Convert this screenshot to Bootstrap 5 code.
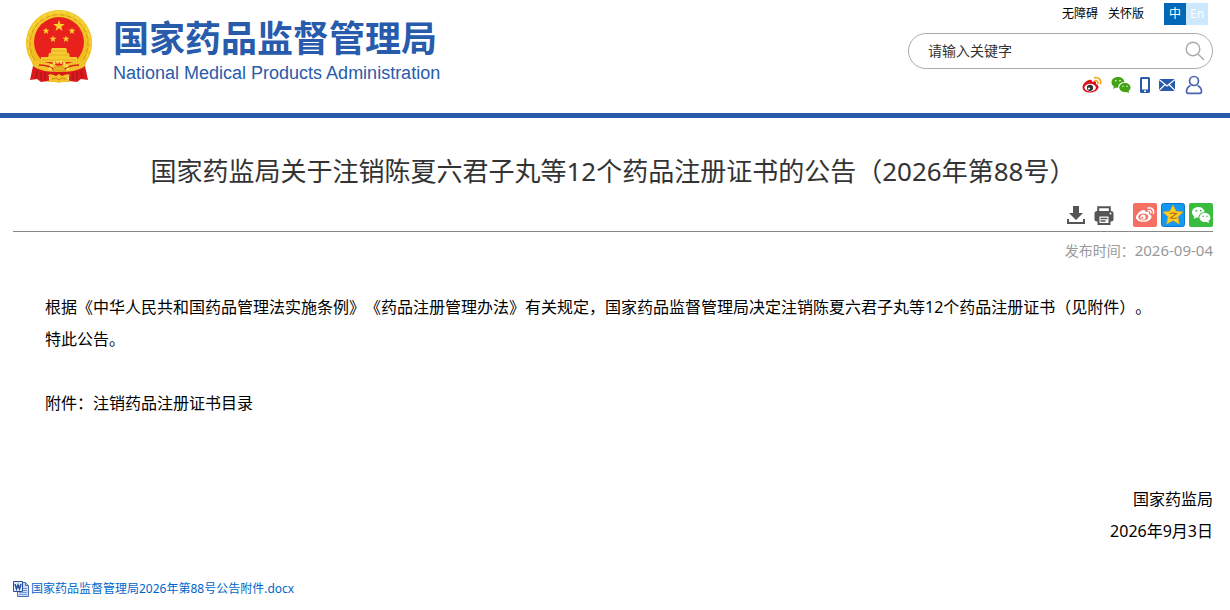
<!DOCTYPE html>
<html lang="zh-CN">
<head>
    <meta charset="UTF-8">
    <meta name="viewport" content="width=device-width, initial-scale=1.0">
    <title>国家药监局公告</title>
    <!-- Bootstrap CSS -->
    <link href="https://cdn.jsdelivr.net/npm/bootstrap@5.3.0/dist/css/bootstrap.min.css" rel="stylesheet">
    <!-- Custom CSS -->
    <style>
        body {
            font-family: "Noto Sans", "Noto Sans CJK SC", sans-serif;
            font-size: 16px;
            line-height: 32px;
            color: #000;
            text-spacing-trim: space-all;
        }
        a {
            color: inherit;
            text-decoration: none;
        }
        svg {
            display: block;
        }
        .page-inner {
            padding: 0 17px 0 13px;
        }
        .site-header {
            height: 118px;
            border-bottom: 5px solid #285bac;
        }
        .brand {
            gap: 20px;
            padding: 9px 0 0 12px;
            color: #285bac;
        }
        .brand-text {
            padding-top: 8px;
        }
        .brand-cn {
            font-size: 36px;
            font-weight: 700;
            line-height: 44px;
        }
        .brand-en {
            font-family: "Liberation Sans", sans-serif;
            font-size: 18px;
            line-height: 24px;
        }
        .tools {
            width: 305px;
            padding-top: 3px;
        }
        .top-links {
            gap: 10px;
            padding-right: 5px;
            font-size: 12px;
            line-height: 22px;
        }
        .lang-switch {
            margin-left: 10px;
        }
        .lang-switch a {
            width: 22px;
            text-align: center;
            color: #fff;
            background: #cce8ff;
        }
        .lang-switch .current {
            background: #0068b7;
        }
        .search-box {
            height: 36px;
            margin-top: 8px;
            padding: 0 7px 0 19px;
            border: 1px solid #aaa;
            border-radius: 18px;
        }
        .search-box input {
            min-width: 0;
            padding: 0;
            border: 0;
            outline: 0;
            font-size: 14px;
            line-height: 20px;
        }
        .search-box input::placeholder {
            color: #333;
            opacity: 1;
        }
        .search-box button {
            padding: 0;
            border: 0;
            background: none;
        }
        .social {
            gap: 9px;
            padding: 6px 10px 0 0;
        }
        .article-title {
            margin: 0;
            padding-top: 33px;
            font-size: 26px;
            line-height: 40px;
            color: #333;
        }
        .share-bar {
            gap: 4px;
            padding: 12px 0 4px;
            border-bottom: 1px solid #888;
        }
        .share-bar button {
            padding: 0;
            border: 0;
            background: none;
        }
        .share-bar .print-btn {
            margin-right: 13px;
        }
        .publish-date {
            padding-top: 2px;
            font-size: 14px;
            color: #999;
        }
        .publish-date time {
            font-size: 15px;
        }
        .article-body {
            padding-top: 24px;
        }
        .article-body p {
            min-height: 32px;
            margin: 0;
        }
        .indented {
            text-indent: 32px;
        }
        .attachment {
            gap: 2px;
            padding-top: 26px;
            font-size: 12px;
            color: #0066cc;
        }
    </style>
</head>
<body>
    <header class="site-header">
        <div class="page-inner d-flex justify-content-between align-items-start">
            <a href="#" class="brand d-flex">
                <!-- National emblem -->
                <svg width="68" height="75" viewBox="0 0 68 75" aria-hidden="true">
                    <defs>
                        <path id="star" d="M0-6 1.4-1.9 5.7-1.9 2.3.7 3.5 4.9 0 2.3-3.5 4.9-2.3.7-5.7-1.9-1.4-1.9z"/>
                        <linearGradient id="gold" x2="0" y2="1">
                            <stop stop-color="#f3cd2c"/>
                            <stop offset="1" stop-color="#f0b91c"/>
                        </linearGradient>
                    </defs>
                    <!-- wheat ring -->
                    <path d="M34 1a33 33 0 0 1 27 52l-3 6H10l-3-6A33 33 0 0 1 34 1z" fill="url(#gold)"/>
                    <path d="M10 51A29 29 0 1 1 58 51" fill="none" stroke="#d99a1c" stroke-width="1" stroke-dasharray="5 2"/>
                    <path d="M8 51A31 31 0 1 1 60 51" fill="none" stroke="#fbe25a" stroke-width="1" stroke-dasharray="4 3"/>
                    <circle cx="34" cy="33" r="25" fill="#e9211d"/>
                    <g fill="#ffd42d">
                        <use href="#star" transform="translate(34 17)"/>
                        <use href="#star" transform="translate(21 22) scale(.6)"/>
                        <use href="#star" transform="translate(47 22) scale(.6)"/>
                        <use href="#star" transform="translate(28 30) scale(.6)"/>
                        <use href="#star" transform="translate(41 30) scale(.6)"/>
                    </g>
                    <!-- gate -->
                    <path d="M27 39h14l1 2H26zM26 41h16v4H26zM24 44h20l1 5H23zM16 48h36v5H16z" fill="#f6cb30"/>
                    <path d="M26 42h16M24 46h20M17 51h34" stroke="#dfa020" stroke-width=".7"/>
                    <!-- lower ears of wheat and cogwheel -->
                    <path d="M6 51c9 0 17 3 28 6 11-3 19-6 28-6l-3 9-13 7H22L9 60z" fill="#f3c228"/>
                    <path d="M14 56c7 0 13 2 16 6M54 56c-7 0-13 2-16 6" fill="none" stroke="#d81a1d" stroke-width="1.500"/>
                    <path d="M25 61a9 8 0 0 1 18 0" fill="none" stroke="#ffe45c" stroke-width="3" stroke-dasharray="2.500 1"/>
                    <path d="M28 62a6 5 0 0 1 12 0z" fill="#e9b020" stroke="#d99518"/>
                    <!-- ribbon -->
                    <path d="M8 57c6 5 17 6 26 6s20-1 26-6l3 14-7-1-4 3-8-1V67H24v5l-8 1-4-3-7 1z" fill="#d81a1d"/>
                    <path d="M12 62l-1 7M16 63v8M20 64v7M56 62l1 7M52 63v8M48 64v7" stroke="#a41118"/>
                    <path d="M23 66c3-2 6 0 8 1l3-2 3 2c2-1 5-3 8-1l-2 3 2 4h-7l-4 1-4-1h-7l2-4z" fill="#f3c228"/>
                    <path d="M27 70l4-1 3 2 3-2 4 1" fill="none" stroke="#d27c15"/>
                </svg>
                <div class="brand-text">
                    <div class="brand-cn">国家药品监督管理局</div>
                    <div class="brand-en">National Medical Products Administration</div>
                </div>
            </a>
            <div class="tools">
                <nav class="top-links d-flex justify-content-end">
                    <a href="#">无障碍</a>
                    <a href="#">关怀版</a>
                    <div class="lang-switch d-flex">
                        <a href="#" class="current">中</a>
                        <a href="#">En</a>
                    </div>
                </nav>
                <form class="search-box d-flex align-items-center">
                    <input type="text" class="flex-grow-1" placeholder="请输入关键字" aria-label="请输入关键字">
                    <button type="button" aria-label="搜索">
                        <svg width="20" height="20" viewBox="0 0 20 20" fill="none" stroke="#aaa" stroke-width="1.4">
                            <circle cx="8" cy="8" r="6.8"/>
                            <path d="m13 13 6 6"/>
                        </svg>
                    </button>
                </form>
                <div class="social d-flex justify-content-end align-items-center">
                    <a href="#" aria-label="微博">
                        <svg width="20" height="18" viewBox="0 0 20 18">
                            <path d="M7 4C3.500 5 .5 8.500 .5 11.500c0 3 3.500 5 7.500 5 4.500 0 8.500-2.500 8.500-5.500 0-1.500-1-2.400-2.500-2.900.7-2.600-.6-3.500-4-2.200C10.300 4 9 3.300 7 4z" fill="#e0101a"/>
                            <ellipse cx="8.200" cy="11.600" rx="5.700" ry="3.800" fill="#fff"/>
                            <circle cx="8" cy="11.800" r="3.100" fill="#333"/>
                            <circle cx="7" cy="12.500" r="1.100" fill="#fff"/>
                            <path d="M12.500 1.700c4-.8 7 2 6 6M13 4.500c2-.3 3.300.9 2.900 2.800" fill="none" stroke="#f3a61c" stroke-width="1.600" stroke-linecap="round"/>
                        </svg>
                    </a>
                    <a href="#" aria-label="微信">
                        <svg width="20" height="18" viewBox="0 0 20 18">
                            <path d="M7 1C3 1 .5 3.300 .5 6.300c0 1.800.9 3.200 2.300 4.100L2.300 13l2.600-1.500c.8.2 1.600.3 2.400.2-.3-3.300 2.200-5.600 6.200-5.700C13 3 10.500 1 7 1z" fill="#43a315"/>
                            <path d="M14 7c-3.300 0-5.700 2-5.700 4.600s2.400 4.600 5.700 4.600l1.800-.2 2.200 1.200-.5-2c1.300-.9 2-2.100 2-3.600C19.500 9 17.200 7 14 7z" fill="#43a315"/>
                            <g fill="#fff"><circle cx="4.800" cy="4.800" r=".8"/><circle cx="9" cy="4.800" r=".8"/><circle cx="12" cy="10.200" r=".7"/><circle cx="16" cy="10.200" r=".7"/></g>
                        </svg>
                    </a>
                    <a href="#" aria-label="移动版">
                        <svg width="10" height="18" viewBox="0 0 10 18">
                            <path fill="#285bac" fill-rule="evenodd" d="M1.500 1h7Q10 1 10 2.500v13Q10 17 8.500 17h-7Q0 17 0 15.500v-13Q0 1 1.500 1zM2 3v10.500h6V3zM4 14.500v1.500h2v-1.500z"/>
                        </svg>
                    </a>
                    <a href="#" aria-label="邮箱">
                        <svg width="16" height="18" viewBox="0 0 16 18">
                            <path d="M0 3h16v12H0z" fill="#285bac"/>
                            <path d="m0 3.500 8 6.500 8-6.500M0 14.500l6-6M16 14.500l-6-6" fill="none" stroke="#fff" stroke-width="1.200"/>
                        </svg>
                    </a>
                    <a href="#" aria-label="用户">
                        <svg width="19" height="20" viewBox="0 0 19 20" fill="none" stroke="#4a65b0" stroke-width="1.700">
                            <circle cx="10" cy="6" r="4.500"/>
                            <path d="M6.500 10.500C3.500 12 2.500 14 2.500 16.500q0 1.800 1.800 1.800h11.400q1.800 0 1.800-1.800c0-2.500-1-4.500-4-6"/>
                        </svg>
                    </a>
                </div>
            </div>
        </div>
    </header>

    <main class="page-inner">
        <h1 class="article-title fw-normal text-center">国家药监局关于注销陈夏六君子丸等12个药品注册证书的公告（2026年第88号）</h1>

        <div class="share-bar d-flex justify-content-end">
            <button type="button" aria-label="下载">
                <svg width="24" height="24" viewBox="0 0 24 24" fill="#555">
                    <path d="M9 3h6v7h4l-7 7-7-7h4z"/>
                    <path d="M3 16h2v3h14v-3h2v5H3z"/>
                </svg>
            </button>
            <button type="button" class="print-btn" aria-label="打印">
                <svg width="24" height="24" viewBox="0 0 24 24">
                    <path d="M6.200 8V4.200h11.600V8" fill="none" stroke="#555" stroke-width="2"/>
                    <path d="M5 8h14q2.500 0 2.500 2.500v6q0 2-2.500 2H5q-2.500 0-2.500-2v-6Q2.500 8 5 8z" fill="#555"/>
                    <path d="M6.500 12.500h11v8.500h-11z" fill="#fff" stroke="#555" stroke-width="2"/>
                    <path d="M8.500 15.500h7M8.500 18h5" stroke="#555" stroke-width="1.400"/>
                    <circle cx="18.500" cy="10.500" r="1" fill="#fff"/>
                </svg>
            </button>
            <button type="button" aria-label="分享到微博">
                <svg width="24" height="24" viewBox="0 0 24 24">
                    <rect width="24" height="24" rx="2" fill="#f56f62"/>
                    <path d="M10.500 7C7 7.500 3 11.500 3 14.500c0 2.700 3.300 4.300 7.300 4.300 4.700 0 8.200-2.300 8.200-4.800 0-1.500-1-2.400-2.500-2.900.6-2.300-.7-3.200-3.700-2C12.600 7.600 12 6.800 10.500 7z" fill="#fff"/>
                    <ellipse cx="10.300" cy="14" rx="5" ry="3.400" fill="#f56f62"/>
                    <circle cx="10" cy="14.200" r="2.600" fill="#fff"/>
                    <circle cx="9.300" cy="14.800" r="1" fill="#f56f62"/>
                    <path d="M15 5c3.800-.8 6.500 2 5.400 5.500M15.500 7.700c1.700-.4 2.700.7 2.300 2" fill="none" stroke="#fff" stroke-width="1.500" stroke-linecap="round"/>
                </svg>
            </button>
            <button type="button" aria-label="分享到QQ空间">
                <svg width="24" height="24" viewBox="0 0 24 24">
                    <rect x=".5" y=".5" width="23" height="23" rx="2" fill="#1598ef" stroke="#0877cc"/>
                    <path d="m12 2 3 6.300 7 .8-5.200 4.700 1.500 7.200-6.300-3.600L5.700 21l1.500-7.200L2 9.100l7-.8z" fill="#ffcf26" stroke="#f3a90c" stroke-width=".7"/>
                    <path d="M8.500 10.500c2.500-.6 4.500-.6 7 0l-6 4.500c2.300.5 4.500.4 6.500-.2" fill="none" stroke="#b3700f" stroke-width="1.200"/>
                </svg>
            </button>
            <button type="button" aria-label="分享到微信">
                <svg width="24" height="24" viewBox="0 0 24 24">
                    <rect width="24" height="24" rx="2" fill="#3abc3e"/>
                    <path d="M9.500 4C5.700 4 3 6.300 3 9.300c0 1.800.8 3.100 2.300 4.100L4.700 16l2.600-1.500 2.200.3c-.1-3.200 2.500-5.600 6.300-5.600C15.200 6 12.800 4 9.500 4z" fill="#fff"/>
                    <path d="M16 10c-3.200 0-5.500 2-5.500 4.600s2.300 4.500 5.500 4.500l1.700-.2 2.300 1.300-.6-2.100c1.300-.9 2-2.100 2-3.500C21.400 12 19 10 16 10z" fill="#fff"/>
                    <g fill="#3abc3e"><circle cx="7.400" cy="7.700" r=".9"/><circle cx="11.700" cy="7.700" r=".9"/><circle cx="14.200" cy="13.200" r=".8"/><circle cx="17.900" cy="13.200" r=".8"/></g>
                </svg>
            </button>
        </div>
        <div class="publish-date text-end">发布时间：<time>2026-09-04</time></div>

        <article class="article-body">
            <p class="indented">根据《中华人民共和国药品管理法实施条例》《药品注册管理办法》有关规定，国家药品监督管理局决定注销陈夏六君子丸等12个药品注册证书（见附件）。</p>
            <p class="indented">特此公告。</p>
            <p></p>
            <p class="indented">附件：注销药品注册证书目录</p>
            <p></p>
            <p></p>
            <p class="text-end">国家药监局</p>
            <p class="text-end">2026年9月3日</p>
        </article>

        <div class="attachment d-flex align-items-center">
            <!-- Word document icon -->
            <svg width="16" height="16" viewBox="0 0 16 16" aria-hidden="true">
                <path d="M4.500 1.500h8l3 3v11h-11z" fill="#cfdef6" stroke="#476fb5"/>
                <path d="M12.500 1.500v3h3" fill="#a9c2ea" stroke="#476fb5"/>
                <path d="M10 7.500h4M10 9.500h4M6 11.500h8M6 13.500h8" stroke="#7699d3"/>
                <path d="M.5.500h9v10h-9z" fill="#e4edfc" stroke="#244e9d"/>
                <path d="m2 3 1.500 5L5 4l1.500 4L8 3" fill="none" stroke="#244e9d" stroke-width="1.500"/>
            </svg>
            <a href="#">国家药品监督管理局2026年第88号公告附件.docx</a>
        </div>
    </main>

    <!-- Bootstrap JS Bundle with Popper -->
    <script src="https://cdn.jsdelivr.net/npm/bootstrap@5.3.0/dist/js/bootstrap.bundle.min.js"></script>
</body>
</html>
